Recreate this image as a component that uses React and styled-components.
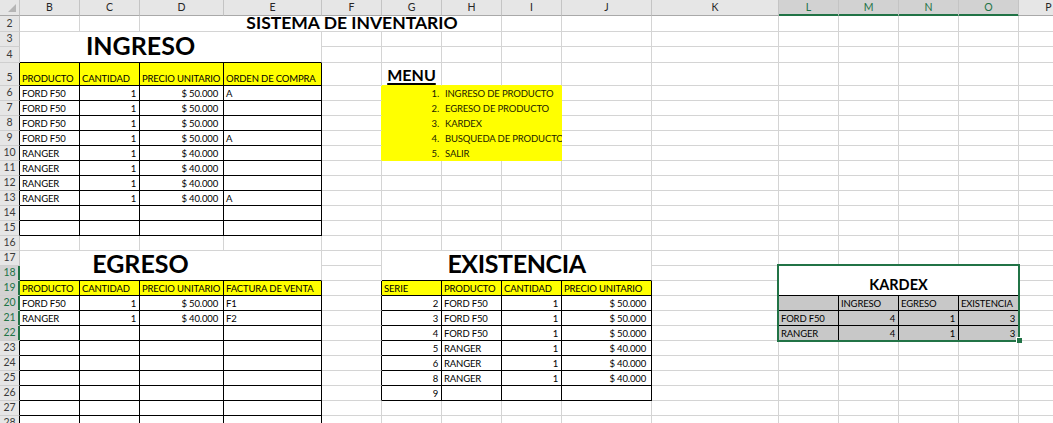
import React from 'react';
import styled, { createGlobalStyle } from 'styled-components';

const COL_W = [20, 60, 60, 84, 98, 60, 60, 60, 60, 90, 127, 60, 60, 60, 60, 60];
const LETTERS = ['', 'B', 'C', 'D', 'E', 'F', 'G', 'H', 'I', 'J', 'K', 'L', 'M', 'N', 'O', 'P'];
const FIRST_ROW = 2;
const LAST_ROW = 28;
const ROW_H = { 2: 16, 3: 15, 4: 16, 5: 23 };
const rowHeight = (r) => ROW_H[r] || 15;

const GRID = '#d4d4d4';
const BLACK = '#000000';
const YELLOW = '#ffff00';
const GRAY = '#c8c8c8';
const GREEN = '#217346';
const HEAD_BG = '#e6e6e6';
const HEAD_SEL = '#d2d2d2';

const SEL = { r1: 18, c1: 11, r2: 22, c2: 14 };

// regions with full black borders [r1, c1, r2, c2]
const BOXES = [
  [5, 1, 15, 4],
  [19, 1, 28, 4],
  [19, 6, 26, 9],
  [20, 11, 22, 14],
];

const FILLS = [
  [5, 1, 5, 4, YELLOW],
  [19, 1, 19, 4, YELLOW],
  [19, 6, 19, 9, YELLOW],
  [6, 6, 10, 8, YELLOW],
  [20, 11, 22, 14, GRAY],
];

const inBox = (r, c) => BOXES.some(([r1, c1, r2, c2]) => r >= r1 && r <= r2 && c >= c1 && c <= c2);
const fillAt = (r, c) => {
  const f = FILLS.find(([r1, c1, r2, c2]) => r >= r1 && r <= r2 && c >= c1 && c <= c2);
  return f ? f[4] : null;
};
const edgeColor = (r1, c1, r2, c2) => {
  if (inBox(r1, c1) || inBox(r2, c2)) return BLACK;
  return fillAt(r1, c1) || fillAt(r2, c2) || GRID;
};

const T = (r, c, text, kind = 'text', extra = {}) => ({ r, c, text, kind, ...extra });

const ENTRIES = [
  T(2, 3, 'SISTEMA DE INVENTARIO', 'heading', { cs: 5 }),
  T(3, 1, 'INGRESO', 'title', { cs: 4, rs: 2, shift: -30 }),
  T(5, 1, 'PRODUCTO'), T(5, 2, 'CANTIDAD'), T(5, 3, 'PRECIO UNITARIO'), T(5, 4, 'ORDEN DE COMPRA'),
  T(5, 6, 'MENU', 'menuHead'),
  ...[
    ['FORD F50', '$ 50.000', 'A'],
    ['FORD F50', '$ 50.000', ''],
    ['FORD F50', '$ 50.000', ''],
    ['FORD F50', '$ 50.000', 'A'],
    ['RANGER', '$ 40.000', ''],
    ['RANGER', '$ 40.000', ''],
    ['RANGER', '$ 40.000', ''],
    ['RANGER', '$ 40.000', 'A'],
  ].flatMap(([p, m, o], i) => [
    T(6 + i, 1, p), T(6 + i, 2, '1', 'num'), T(6 + i, 3, m, 'money'), T(6 + i, 4, o),
  ]),
  ...['INGRESO DE PRODUCTO', 'EGRESO DE PRODUCTO', 'KARDEX', 'BUSQUEDA DE PRODUCTO', 'SALIR'].map((label, i) =>
    T(6 + i, 6, label, 'menuItem', { cs: 3, n: i + 1 })
  ),
  T(17, 1, 'EGRESO', 'title', { cs: 4, rs: 2, shift: -30 }),
  T(17, 6, 'EXISTENCIA', 'title', { cs: 4, rs: 2, shift: 0, tight: true }),
  T(18, 11, 'KARDEX', 'kardexTitle', { cs: 4, rs: 2 }),
  T(19, 1, 'PRODUCTO'), T(19, 2, 'CANTIDAD'), T(19, 3, 'PRECIO UNITARIO'), T(19, 4, 'FACTURA DE VENTA'),
  T(19, 6, 'SERIE'), T(19, 7, 'PRODUCTO'), T(19, 8, 'CANTIDAD'), T(19, 9, 'PRECIO UNITARIO'),
  T(20, 1, 'FORD F50'), T(20, 2, '1', 'num'), T(20, 3, '$ 50.000', 'money'), T(20, 4, 'F1'),
  T(21, 1, 'RANGER'), T(21, 2, '1', 'num'), T(21, 3, '$ 40.000', 'money'), T(21, 4, 'F2'),
  ...[
    ['2', 'FORD F50', '1', '$ 50.000'],
    ['3', 'FORD F50', '1', '$ 50.000'],
    ['4', 'FORD F50', '1', '$ 50.000'],
    ['5', 'RANGER', '1', '$ 40.000'],
    ['6', 'RANGER', '1', '$ 40.000'],
    ['8', 'RANGER', '1', '$ 40.000'],
    ['9', '', '', ''],
  ].flatMap(([s, p, q, m], i) => [
    T(20 + i, 6, s, 'num'), T(20 + i, 7, p), T(20 + i, 8, q, 'num'), T(20 + i, 9, m, 'money'),
  ]),
  T(20, 12, 'INGRESO'), T(20, 13, 'EGRESO'), T(20, 14, 'EXISTENCIA'),
  T(21, 11, 'FORD F50'), T(21, 12, '4', 'num'), T(21, 13, '1', 'num'), T(21, 14, '3', 'num'),
  T(22, 11, 'RANGER'), T(22, 12, '4', 'num'), T(22, 13, '1', 'num'), T(22, 14, '3', 'num'),
];

const GlobalStyle = createGlobalStyle`
  html, body { margin: 0; padding: 0; background: #ffffff; overflow: hidden; }
  body { font-family: Lato, "Liberation Sans", sans-serif; }
`;

const Sheet = styled.div`
  display: grid;
  grid-template-columns: ${COL_W.map((w) => `${w}px`).join(' ')};
  grid-template-rows: 16px ${Array.from({ length: LAST_ROW - FIRST_ROW + 1 }, (_, i) => `${rowHeight(i + FIRST_ROW)}px`).join(' ')};
  width: 1053px;
  height: 423px;
  overflow: hidden;
  background: #ffffff;
  color: #000000;
  font-family: Lato, "Liberation Sans", sans-serif;
`;

const Corner = styled.div`
  grid-column: 1;
  grid-row: 1;
  box-sizing: border-box;
  background: ${HEAD_BG};
  border-right: 1px solid #c4c4c4;
  border-bottom: 1px solid #a9a9a9;
  display: flex;
  align-items: flex-end;
  justify-content: flex-end;
  padding: 0 2px 2px 0;
`;

const ColHeader = styled.div`
  grid-column: ${(p) => p.$c + 1};
  grid-row: 1;
  box-sizing: border-box;
  background: ${(p) => (p.$sel ? HEAD_SEL : HEAD_BG)};
  color: ${(p) => (p.$sel ? GREEN : '#262626')};
  border-right: 1px solid #c4c4c4;
  border-bottom: 1px solid ${(p) => (p.$sel ? GREEN : '#a9a9a9')};
  box-shadow: ${(p) => (p.$sel ? `inset 0 -1px 0 ${GREEN}` : 'none')};
  display: flex;
  align-items: flex-end;
  justify-content: center;
  padding-bottom: 3px;
  font-size: 10.5px;
  line-height: 1;
`;

const RowHeader = styled.div`
  grid-column: 1;
  grid-row: ${(p) => p.$r};
  box-sizing: border-box;
  background: ${(p) => (p.$sel ? HEAD_SEL : HEAD_BG)};
  color: ${(p) => (p.$sel ? GREEN : '#3a3a3a')};
  border-right: 1px solid ${(p) => (p.$sel ? GREEN : p.$edge)};
  border-bottom: 1px solid #cfcfcf;
  box-shadow: ${(p) => (p.$sel ? `inset -1px 0 0 ${GREEN}` : 'none')};
  display: flex;
  align-items: flex-end;
  justify-content: center;
  padding-bottom: 3px;
  font-size: 10.5px;
  line-height: 1;
  overflow: hidden;
`;

const JUSTIFY = { left: 'flex-start', right: 'flex-end', center: 'center' };

const Cell = styled.div`
  grid-column: ${(p) => p.$c + 1} / span ${(p) => p.$cs};
  grid-row: ${(p) => p.$r} / span ${(p) => p.$rs};
  box-sizing: border-box;
  min-width: 0;
  background: ${(p) => p.$fill || '#ffffff'};
  border-right: 1px solid ${(p) => p.$right};
  border-bottom: 1px solid ${(p) => p.$bottom};
  display: flex;
  align-items: flex-end;
  justify-content: ${(p) => JUSTIFY[p.$align]};
  padding: 0 ${(p) => p.$pr}px ${(p) => p.$pb}px ${(p) => p.$pl}px;
  font-size: 9.5px;
  letter-spacing: -0.15px;
  line-height: 1;
  white-space: nowrap;
`;

const Txt = styled.span`
  display: block;
  line-height: 1;
`;

const Title = styled.span`
  display: block;
  font-size: ${(p) => p.$size}px;
  font-weight: 700;
  line-height: 1;
  letter-spacing: ${(p) => (p.$tight ? '-0.4px' : '0')};
  text-decoration: ${(p) => (p.$underline ? 'underline' : 'none')};
  text-decoration-thickness: 1.5px;
  text-underline-offset: 2px;
`;

const MenuLine = styled.span`
  display: flex;
  align-items: baseline;
  color: #1c1c00;
`;

const MenuNum = styled.span`
  display: inline-block;
  width: 14px;
  margin-right: 6px;
  text-align: right;
`;

const Selection = styled.div`
  grid-column: ${SEL.c1 + 1} / span ${SEL.c2 - SEL.c1 + 1};
  grid-row: ${SEL.r1} / span ${SEL.r2 - SEL.r1 + 1};
  margin: -2px -1px -1px -2px;
  box-sizing: border-box;
  border: 2px solid ${GREEN};
  pointer-events: none;
  position: relative;
  z-index: 2;
`;

const FillHandle = styled.span`
  position: absolute;
  right: -4px;
  bottom: -3px;
  width: 5px;
  height: 5px;
  background: ${GREEN};
  border: 1px solid #ffffff;
  border-right: none;
  border-bottom: none;
`;

const KIND = {
  text: { align: 'left', pl: 2, pr: 2, pb: 2 },
  num: { align: 'right', pl: 2, pr: 3, pb: 2 },
  money: { align: 'right', pl: 2, pr: 5, pb: 2 },
  heading: { align: 'center', pl: 63, pr: 0, pb: 0 },
  title: { align: 'center', pl: 0, pr: 0, pb: 4 },
  kardexTitle: { align: 'center', pl: 0, pr: 0, pb: 3 },
  menuHead: { align: 'center', pl: 0, pr: 0, pb: 2 },
  menuItem: { align: 'left', pl: 43, pr: 0, pb: 2 },
};

function renderContent(e) {
  switch (e.kind) {
    case 'heading':
      return <Title $size={17.5}>{e.text}</Title>;
    case 'title':
      return <Title $size={25} $tight={e.tight}>{e.text}</Title>;
    case 'kardexTitle':
      return <Title $size={14.5}>{e.text}</Title>;
    case 'menuHead':
      return <Title $size={16} $underline>{e.text}</Title>;
    case 'menuItem':
      return (
        <MenuLine>
          <MenuNum>{e.n}.</MenuNum>
          <Txt>{e.text}</Txt>
        </MenuLine>
      );
    default:
      return <Txt>{e.text}</Txt>;
  }
}

function buildCells() {
  const anchors = new Map();
  const covered = new Set();
  ENTRIES.forEach((e) => {
    const rs = e.rs || 1;
    const cs = e.cs || 1;
    anchors.set(`${e.r},${e.c}`, { ...e, rs, cs });
    for (let r = e.r; r < e.r + rs; r++) {
      for (let c = e.c; c < e.c + cs; c++) {
        if (r !== e.r || c !== e.c) covered.add(`${r},${c}`);
      }
    }
  });

  const out = [];
  for (let r = FIRST_ROW; r <= LAST_ROW; r++) {
    for (let c = 1; c < COL_W.length; c++) {
      const key = `${r},${c}`;
      if (covered.has(key)) continue;
      const e = anchors.get(key) || { r, c, rs: 1, cs: 1, text: '', kind: 'text' };
      const lastR = e.r + e.rs - 1;
      const lastC = e.c + e.cs - 1;
      const k = KIND[e.kind];
      const ownFill = e.rs === 1 && e.cs === 1 ? fillAt(r, c) : fillAt(r, c) && fillAt(lastR, lastC);
      const pr = e.kind === 'title' && e.shift ? -2 * e.shift : k.pr;
      out.push(
        <Cell
          key={key}
          $r={r}
          $c={c}
          $rs={e.rs}
          $cs={e.cs}
          $fill={ownFill}
          $right={edgeColor(lastR, lastC, lastR, lastC + 1)}
          $bottom={edgeColor(lastR, c, lastR + 1, c)}
          $align={k.align}
          $pl={k.pl}
          $pr={pr}
          $pb={k.pb}
        >
          {e.text ? renderContent(e) : null}
        </Cell>
      );
    }
  }
  return out;
}

export default function App() {
  const rows = [];
  for (let r = FIRST_ROW; r <= LAST_ROW; r++) rows.push(r);
  return (
    <>
      <GlobalStyle />
      <Sheet>
        <Corner>
          <svg width="9" height="9" viewBox="0 0 9 9">
            <polygon points="8,0 8,8 0,8" fill="#b5b5b5" />
          </svg>
        </Corner>
        {LETTERS.slice(1).map((l, i) => (
          <ColHeader key={l} $c={i + 1} $sel={i + 1 >= SEL.c1 && i + 1 <= SEL.c2}>
            {l}
          </ColHeader>
        ))}
        {rows.map((r) => (
          <RowHeader
            key={r}
            $r={r}
            $sel={r >= SEL.r1 && r <= SEL.r2}
            $edge={inBox(r, 1) ? BLACK : '#c4c4c4'}
          >
            {r}
          </RowHeader>
        ))}
        {buildCells()}
        <Selection>
          <FillHandle />
        </Selection>
      </Sheet>
    </>
  );
}
